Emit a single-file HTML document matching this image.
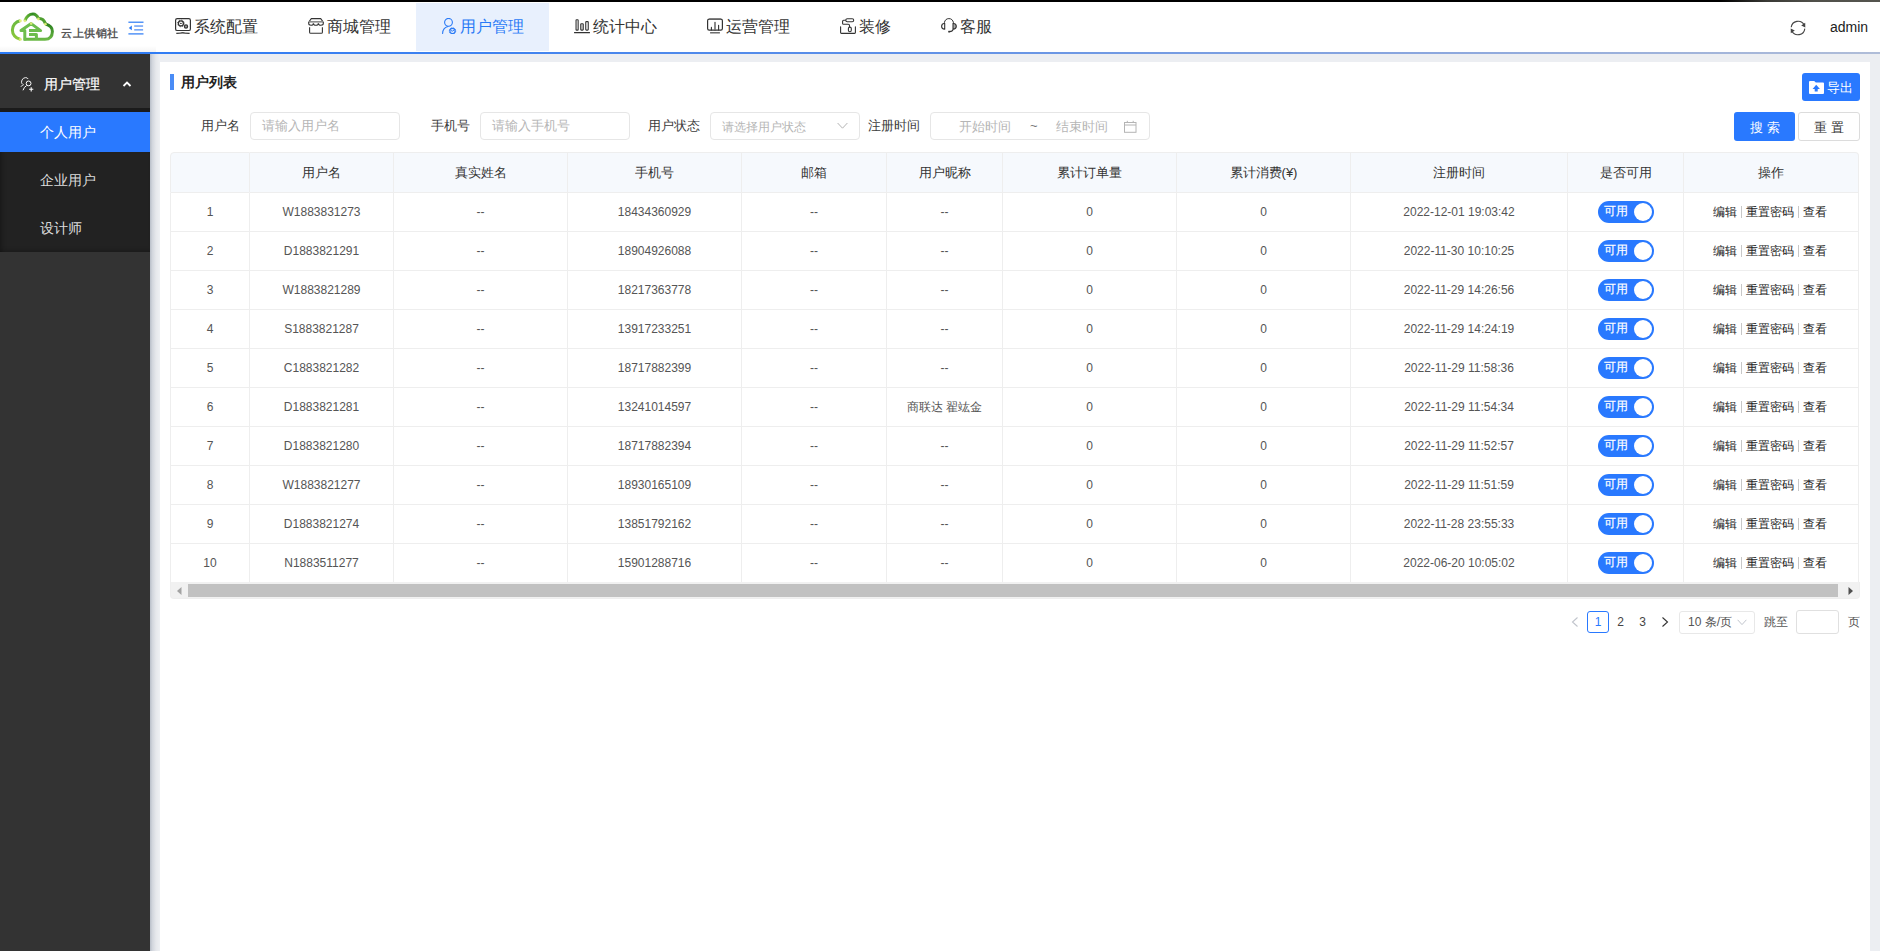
<!DOCTYPE html>
<html><head><meta charset="utf-8">
<style>
*{box-sizing:border-box;margin:0;padding:0}
html,body{width:1880px;height:951px;overflow:hidden;background:#eceef2;font-family:"Liberation Sans",sans-serif;color:#333}
.abs{position:absolute}
#topline{left:0;top:0;width:1880px;height:2px;background:linear-gradient(to right,#000 91.5%,#3a3a36 94%,#50504a 96.5%,#55554f 100%)}
#header{left:0;top:2px;width:1880px;height:50px;background:#fff}
#hline{left:0;top:52px;width:1880px;height:2px;background:linear-gradient(to right,#2a7af6 0%,#3f82ef 25%,#5a8ee8 45%,#8aa6de 75%,#b0bdd8 100%)}
#side{left:0;top:54px;width:150px;height:897px;background:#333}
#sideshadow{left:150px;top:54px;width:10px;height:897px;background:linear-gradient(to right,#b9bfc9,#d3d7de 25%,#e6e8ec 60%,#eef0f3)}
#card{left:160px;top:62px;width:1710px;height:889px;background:#fff}
.nav{top:2px;height:50px;font-size:16px;color:#333;white-space:nowrap}
.nav .ic{position:absolute;top:16px;width:16px;height:16px}
.nav .tx{position:absolute;top:0;line-height:50px}
.nav.act{background:#e8f0fd;color:#2a7af6;top:3px;height:48px}
.nav.act .ic{top:15px}
.nav.act .tx{line-height:48px}

.lbl{top:117px;font-size:13px;line-height:18px;color:#3c3c3c}
.inp{top:112px;height:28px;border:1px solid #e6e6e6;border-radius:4px;background:#fff}
.inp span{position:absolute;left:11px;top:0;line-height:26px;font-size:13px;color:#b6b6b6}
.btn{border-radius:3px}
.btn.blue{background:#2979ff}
#tbl th{height:41px;background:#f6f9fd;border-right:1px solid #eeeeee;border-bottom:1px solid #eeeeee;border-top:1px solid #eeeeee;font-weight:normal;font-size:13px;color:#333;text-align:center;padding:0}
#tbl td{height:39px;border-right:1px solid #eeeeee;border-bottom:1px solid #eeeeee;font-size:12px;color:#555;text-align:center;padding:0;white-space:nowrap}
#tbl th:first-child,#tbl td:first-child{border-left:1px solid #eeeeee}
#tbl th:first-child{border-top-left-radius:4px}
#tbl th:last-child{border-top-right-radius:4px}
.sw{display:inline-block;position:relative;width:56px;height:22px;border-radius:11px;background:#2979ff;vertical-align:middle}
.swt{position:absolute;left:6px;top:-1px;line-height:22px;font-size:12px;color:#fff;letter-spacing:0.5px;-webkit-text-stroke:0.2px #fff}
.swk{position:absolute;left:36px;top:2px;width:18px;height:18px;border-radius:50%;background:#fff}
.op{color:#222!important;padding-right:2px!important}
.op i{display:inline-block;width:1px;height:12px;background:#c8c8c8;margin:0 4px;vertical-align:middle;position:relative;top:0px}
table{border-collapse:collapse;table-layout:fixed}
</style></head>
<body>
<div id="topline" class="abs"></div>
<div id="header" class="abs"></div>
<div class="abs" style="left:0;top:46px;width:156px;height:6px;background:linear-gradient(to bottom,rgba(0,0,0,0),rgba(0,0,0,0.045))"></div><div id="hline" class="abs"></div>
<!-- logo -->
<svg class="abs" style="left:0;top:0" width="60" height="50" viewBox="0 0 60 50">
 <defs>
  <linearGradient id="lg1" x1="0" y1="0" x2="0" y2="1"><stop offset="0" stop-color="#6bb93f"/><stop offset="1" stop-color="#8cc83a"/></linearGradient>
  <linearGradient id="lg2" x1="0" y1="0" x2="1" y2="0"><stop offset="0" stop-color="#72bd3c"/><stop offset="0.55" stop-color="#2f8a22"/><stop offset="1" stop-color="#5aa834"/></linearGradient>
  <linearGradient id="lg4" x1="0" y1="0" x2="0" y2="1"><stop offset="0" stop-color="#2a7f1e"/><stop offset="1" stop-color="#6ab845"/></linearGradient>
 </defs>
 <path d="M20.1 20.8 A9.4 9.4 0 0 0 20.1 39.3" fill="none" stroke="url(#lg1)" stroke-width="3"/>
 <path d="M24.9 20.8 Q27.5 14 33 14 Q36.5 14 38.4 18.6" fill="none" stroke="url(#lg2)" stroke-width="3"/>
 <path d="M38.4 18.6 Q43.5 18 45.5 24" fill="none" stroke="#4f9f30" stroke-width="3"/>
 <path d="M45.5 24 Q52.5 26 52.4 31.5 Q52.2 39.3 45 39.3 L23.8 39.3" fill="none" stroke="url(#lg4)" stroke-width="3"/>
 <path d="M24.8 40.6 L24.8 30.6 L21 30.6 L31.2 23.6 L40.6 30.6 L29 30.6 M29 34.4 L36.4 34.4 L36.4 39.5" fill="none" stroke="#6dbd4c" stroke-width="3" stroke-linejoin="round"/>
 <circle cx="20.3" cy="20.8" r="1.5" fill="#e2ee7a" opacity="0.9"/><circle cx="20.3" cy="39.3" r="1.5" fill="#d8ea6a" opacity="0.9"/>
 <circle cx="24.9" cy="20.8" r="1.4" fill="#e2ee7a" opacity="0.9"/><circle cx="38.4" cy="19" r="1.4" fill="#e2ee7a" opacity="0.9"/><circle cx="45.4" cy="24.2" r="1.4" fill="#e2ee7a" opacity="0.9"/>
 <circle cx="31.2" cy="23.6" r="1.3" fill="#e2ee7a" opacity="0.9"/>
</svg>
<div class="abs" style="left:61px;top:25px;font-size:11px;line-height:16px;color:#585858;font-weight:bold;letter-spacing:0.5px">云上供销社</div>
<svg class="abs" style="left:128px;top:21px" width="16" height="14" viewBox="0 0 16 14"><rect x="0.4" y="0.6" width="15.1" height="1.2" fill="#2a7af6"/><rect x="6.2" y="4.3" width="8.9" height="1.5" fill="#6b9ff5"/><rect x="6.2" y="8.1" width="8.9" height="1.5" fill="#6b9ff5"/><rect x="0.4" y="12.3" width="15.1" height="1.2" fill="#2a7af6"/><path d="M0.8 7 L3.8 4.6 L3.8 9.3 Z" fill="#2a7af6"/></svg>
<!-- nav -->
<div class="abs nav" style="left:150px;width:133px">
 <svg class="ic" style="left:25px" viewBox="0 0 16 16"><rect x="0.6" y="0.6" width="14.8" height="11.9" rx="1.6" fill="none" stroke="#333" stroke-width="1.2"/><circle cx="5.9" cy="5.4" r="2.5" fill="none" stroke="#333" stroke-width="1.3"/><circle cx="5.9" cy="5.4" r="3.3" fill="none" stroke="#333" stroke-width="0.9" stroke-dasharray="1.1 1.5"/><ellipse cx="5.9" cy="5.4" rx="0.9" ry="0.6" fill="#333"/><circle cx="11" cy="8.5" r="1.6" fill="#999" stroke="#333" stroke-width="1.2"/><path d="M1.3 15.4 Q7 14.6 14.6 15.4" stroke="#333" stroke-width="1.1" fill="none"/><path d="M5.2 14.9 Q7.7 13.7 10.2 14.9 Z" fill="#333"/></svg>
 <span class="tx" style="left:44px">系统配置</span>
</div>
<div class="abs nav" style="left:283px;width:133px">
 <svg class="ic" style="left:25px" viewBox="0 0 16 16"><path d="M3.3 0.6 L12.7 0.6 L15 3.8 L1 3.8 Z" fill="none" stroke="#333" stroke-width="1.1" stroke-linejoin="round"/><path d="M1 3.8 L15 3.8" stroke="#999" stroke-width="1.2"/><path d="M0.7 4 L0.7 5.6 Q0.7 7.3 3 7.3 Q5.3 7.3 5.4 5.2 Q5.6 7.3 7.9 7.3 Q10.2 7.3 10.4 5.2 Q10.6 7.3 12.9 7.3 Q15.3 7.3 15.3 5.6 L15.3 4" fill="none" stroke="#333" stroke-width="1.1"/><path d="M1.6 9.2 L1.6 14.2 Q1.6 15.3 2.7 15.3 L13.3 15.3 Q14.4 15.3 14.4 14.2 L14.4 9.2" fill="none" stroke="#333" stroke-width="1.1"/></svg>
 <span class="tx" style="left:44px">商城管理</span>
</div>
<div class="abs nav act" style="left:416px;width:133px">
 <svg class="ic" style="left:26px" viewBox="0 0 16 16"><circle cx="6.5" cy="4.3" r="3.9" fill="none" stroke="#2a7af6" stroke-width="1.1"/><path d="M0.6 15.5 Q0.8 9.6 6 8.5" fill="none" stroke="#2a7af6" stroke-width="1.1" stroke-linecap="round"/><circle cx="10.5" cy="13" r="2.6" fill="none" stroke="#2a7af6" stroke-width="1.1"/><circle cx="10.5" cy="13" r="3.2" fill="none" stroke="#2a7af6" stroke-width="0.8" stroke-dasharray="1.6 0.9"/><path d="M9 12.6 Q10.5 14 12.3 11.8" fill="none" stroke="#2a7af6" stroke-width="1"/></svg>
 <span class="tx" style="left:44px">用户管理</span>
</div>
<div class="abs nav" style="left:549px;width:133px">
 <svg class="ic" style="left:25px" viewBox="0 0 16 16"><path d="M0.5 14.6 L15.5 14.6" stroke="#333" stroke-width="1.2" stroke-linecap="round"/><rect x="2.05" y="1.75" width="2.1" height="10.4" rx="0.5" fill="none" stroke="#333" stroke-width="1.1"/><rect x="6.75" y="5.75" width="2.5" height="6.4" rx="0.6" fill="#ddd" stroke="#333" stroke-width="1.1"/><rect x="11.75" y="3.65" width="2.5" height="8.5" rx="0.6" fill="none" stroke="#333" stroke-width="1.1"/></svg>
 <span class="tx" style="left:44px">统计中心</span>
</div>
<div class="abs nav" style="left:682px;width:133px">
 <svg class="ic" style="left:25px" viewBox="0 0 16 16"><rect x="0.6" y="1.1" width="14.8" height="11.1" rx="1.6" fill="none" stroke="#333" stroke-width="1.2"/><path d="M2.2 0.4 L13.8 0.4" stroke="#777" stroke-width="0.8"/><path d="M4.4 12 L4.4 9.4 M8 12 L8 4.3 M11.6 12 L11.6 7.3" stroke="#333" stroke-width="1.1" stroke-linecap="round"/><path d="M8 12 L8 4.3" stroke="#888" stroke-width="1.1"/><path d="M3.1 14.8 L12.9 14.8" stroke="#555" stroke-width="1.3"/></svg>
 <span class="tx" style="left:44px">运营管理</span>
</div>
<div class="abs nav" style="left:815px;width:101px">
 <svg class="ic" style="left:25px" viewBox="0 0 16 16"><rect x="5.8" y="0.8" width="7.9" height="2.9" rx="1.45" fill="none" stroke="#333" stroke-width="1.1"/><path d="M5.8 2.2 L3.6 2.2 Q2.6 2.2 2.6 3.2 L2.6 5.4 Q2.6 6.3 3.6 6.3 L8.3 6.3 Q9.5 6.3 9.5 7.5 L9.5 9" fill="none" stroke="#333" stroke-width="1.1"/><rect x="8.4" y="9.1" width="2.9" height="4.6" rx="1.45" fill="none" stroke="#333" stroke-width="1.1"/><path d="M0.6 8.7 L0.6 14.6 Q0.6 15.4 1.4 15.4 L14.6 15.4 Q15.4 15.4 15.4 14.6 L15.4 8.7" fill="none" stroke="#333" stroke-width="1.1" stroke-linecap="round"/></svg>
 <span class="tx" style="left:44px">装修</span>
</div>
<div class="abs nav" style="left:916px;width:101px">
 <svg class="ic" style="left:25px" viewBox="0 0 16 16"><path d="M3.3 4.8 Q4.2 0.6 7.9 0.6 Q11.6 0.6 12.5 4.8" fill="none" stroke="#333" stroke-width="1"/><path d="M3.7 5.2 L3.7 11.3 Q0.6 10.8 0.6 8.2 Q0.6 5.6 3.7 5.2 Z" fill="none" stroke="#333" stroke-width="1.1" stroke-linejoin="round"/><path d="M12 5.2 L12 11.3 Q15.3 10.8 15.3 8.2 Q15.3 5.6 12 5.2 Z" fill="#aaa" stroke="#333" stroke-width="1.1" stroke-linejoin="round"/><path d="M12.2 11.4 Q11.6 13.5 8.6 13.6" fill="none" stroke="#333" stroke-width="1.1"/><rect x="7.2" y="12.8" width="1.8" height="1.8" rx="0.5" fill="#333"/></svg>
 <span class="tx" style="left:44px">客服</span>
</div>
<!-- right -->
<svg class="abs" style="left:1790px;top:20px" width="16" height="16" viewBox="0 0 16 16"><path d="M1.2 7.3 A6.9 6.9 0 0 1 14.2 5" fill="none" stroke="#444" stroke-width="1.1"/><path d="M14.8 8.6 A6.9 6.9 0 0 1 1.8 11" fill="none" stroke="#444" stroke-width="1.1"/><path d="M15.2 2.8 L15.3 7.4 L11.2 5.6 Z" fill="#444"/><path d="M0.8 13.2 L0.7 8.6 L4.8 10.4 Z" fill="#444"/></svg>
<div class="abs" style="left:1830px;top:18px;font-size:14px;line-height:18px;color:#222">admin</div>

<div id="side" class="abs"></div>

<!-- sidebar -->
<div class="abs" style="left:0;top:54px;width:150px;height:54px;background:#333"></div>
<svg class="abs" style="left:20px;top:76px" width="14" height="16" viewBox="0 0 14 16"><path d="M2.2 8 Q0.8 6.5 2 4 Q3.2 1.6 5.6 1.6 Q7.4 1.6 8.2 3" fill="none" stroke="#fff" stroke-width="0.9"/><circle cx="8.6" cy="7.4" r="2.4" fill="none" stroke="#fff" stroke-width="1"/><path d="M0.9 10.8 Q1.8 9 3.8 8.6" fill="none" stroke="#fff" stroke-width="0.9"/><path d="M3 14.3 Q4 11 6.6 9.6" fill="none" stroke="#fff" stroke-width="1"/><path d="M11.2 11.2 L11.2 15.4 M9.1 13.3 L13.3 13.3" stroke="#fff" stroke-width="1.1"/></svg>
<div class="abs" style="left:44px;top:74px;font-size:14px;line-height:20px;color:#fff;-webkit-text-stroke:0.2px #fff">用户管理</div>
<svg class="abs" style="left:122px;top:80px" width="10" height="8" viewBox="0 0 10 8"><path d="M1.5 6 L5 2.5 L8.5 6" fill="none" stroke="#fff" stroke-width="1.8"/></svg>
<div class="abs" style="left:0;top:108px;width:150px;height:4px;background:#1b1b1b"></div>
<div class="abs" style="left:0;top:112px;width:150px;height:40px;background:#2979ff"></div>
<div class="abs" style="left:0;top:152px;width:150px;height:100px;background:#222;box-shadow:inset 5px 0 4px -3px rgba(0,0,0,0.25),inset 0 -4px 4px -3px rgba(0,0,0,0.25)"></div>
<div class="abs" style="left:40px;top:122px;font-size:14px;line-height:20px;color:#fff">个人用户</div>
<div class="abs" style="left:40px;top:170px;font-size:14px;line-height:20px;color:#ddd">企业用户</div>
<div class="abs" style="left:40px;top:218px;font-size:14px;line-height:20px;color:#ddd">设计师</div>
<div id="sideshadow" class="abs"></div>
<div id="card" class="abs"></div>
<div class="abs" style="left:170px;top:74px;width:4px;height:16px;background:#4a8cf6"></div>
<div class="abs" style="left:181px;top:72px;font-size:14px;line-height:20px;font-weight:bold;color:#222">用户列表</div>
<div class="abs btn blue" style="left:1802px;top:73px;width:58px;height:28px">
 <svg style="position:absolute;left:7px;top:8px" width="15" height="13" viewBox="0 0 15 13"><path d="M0 1 Q0 0 1 0 L5.2 0 L6.8 1.6 L14 1.6 Q15 1.6 15 2.6 L15 12 Q15 13 14 13 L1 13 Q0 13 0 12 Z" fill="#fff"/><path d="M7.2 3.8 L10.9 8 L8.7 8 L8.7 10.6 L5.7 10.6 L5.7 8 L3.6 8 Z" fill="#2979ff"/></svg>
 <span style="position:absolute;left:25px;top:1px;line-height:28px;font-size:13px;color:#fff">导出</span>
</div>
<div class="abs lbl" style="left:201px">用户名</div>
<div class="abs inp" style="left:250px;width:150px"><span>请输入用户名</span></div>
<div class="abs lbl" style="left:431px">手机号</div>
<div class="abs inp" style="left:480px;width:150px"><span>请输入手机号</span></div>
<div class="abs lbl" style="left:648px">用户状态</div>
<div class="abs inp" style="left:710px;width:150px"><span style="font-size:12px;top:1px">请选择用户状态</span>
 <svg style="position:absolute;left:126px;top:9px" width="11" height="8" viewBox="0 0 11 8"><path d="M0.6 1 L5.5 6.2 L10.4 1" fill="none" stroke="#b4b4b4" stroke-width="1"/></svg>
</div>
<div class="abs lbl" style="left:868px">注册时间</div>
<div class="abs inp" style="left:930px;width:220px">
 <span style="left:28px;top:1px">开始时间</span><span style="left:99px;color:#777">~</span><span style="left:125px;top:1px">结束时间</span>
 <svg style="position:absolute;left:193px;top:7px" width="13" height="14" viewBox="0 0 13 14"><rect x="0.5" y="2.5" width="11.5" height="9.8" fill="none" stroke="#b4b4b4" stroke-width="1"/><path d="M0.5 5 L12 5" stroke="#b4b4b4" stroke-width="1"/><path d="M3.3 0.8 L3.3 3 M9.2 0.8 L9.2 3" stroke="#b4b4b4" stroke-width="1"/></svg>
</div>
<div class="abs btn blue" style="left:1734px;top:112px;width:61px;height:29px;line-height:31px;text-align:center;font-size:13px;color:#fff;letter-spacing:4px;text-indent:4px">搜索</div>
<div class="abs btn" style="left:1798px;top:112px;width:62px;height:29px;line-height:30px;text-align:center;font-size:13px;color:#333;letter-spacing:4px;text-indent:4px;border:1px solid #dcdcdc;background:#fff">重置</div>
<table id="tbl" class="abs" style="left:170px;top:152px;border-spacing:0;border-collapse:separate"><colgroup><col style="width:80px"><col style="width:144px"><col style="width:174px"><col style="width:174px"><col style="width:145px"><col style="width:116px"><col style="width:174px"><col style="width:174px"><col style="width:217px"><col style="width:116px"><col style="width:175px"></colgroup><tr class="th"><th></th><th>用户名</th><th>真实姓名</th><th>手机号</th><th>邮箱</th><th>用户昵称</th><th>累计订单量</th><th>累计消费(¥)</th><th>注册时间</th><th>是否可用</th><th>操作</th></tr><tr><td>1</td><td>W1883831273</td><td>--</td><td>18434360929</td><td>--</td><td>--</td><td>0</td><td>0</td><td>2022-12-01 19:03:42</td><td><span class="sw"><span class="swt">可用</span><span class="swk"></span></span></td><td class="op">编辑<i></i>重置密码<i></i>查看</td></tr><tr><td>2</td><td>D1883821291</td><td>--</td><td>18904926088</td><td>--</td><td>--</td><td>0</td><td>0</td><td>2022-11-30 10:10:25</td><td><span class="sw"><span class="swt">可用</span><span class="swk"></span></span></td><td class="op">编辑<i></i>重置密码<i></i>查看</td></tr><tr><td>3</td><td>W1883821289</td><td>--</td><td>18217363778</td><td>--</td><td>--</td><td>0</td><td>0</td><td>2022-11-29 14:26:56</td><td><span class="sw"><span class="swt">可用</span><span class="swk"></span></span></td><td class="op">编辑<i></i>重置密码<i></i>查看</td></tr><tr><td>4</td><td>S1883821287</td><td>--</td><td>13917233251</td><td>--</td><td>--</td><td>0</td><td>0</td><td>2022-11-29 14:24:19</td><td><span class="sw"><span class="swt">可用</span><span class="swk"></span></span></td><td class="op">编辑<i></i>重置密码<i></i>查看</td></tr><tr><td>5</td><td>C1883821282</td><td>--</td><td>18717882399</td><td>--</td><td>--</td><td>0</td><td>0</td><td>2022-11-29 11:58:36</td><td><span class="sw"><span class="swt">可用</span><span class="swk"></span></span></td><td class="op">编辑<i></i>重置密码<i></i>查看</td></tr><tr><td>6</td><td>D1883821281</td><td>--</td><td>13241014597</td><td>--</td><td>商联达 翟竑金</td><td>0</td><td>0</td><td>2022-11-29 11:54:34</td><td><span class="sw"><span class="swt">可用</span><span class="swk"></span></span></td><td class="op">编辑<i></i>重置密码<i></i>查看</td></tr><tr><td>7</td><td>D1883821280</td><td>--</td><td>18717882394</td><td>--</td><td>--</td><td>0</td><td>0</td><td>2022-11-29 11:52:57</td><td><span class="sw"><span class="swt">可用</span><span class="swk"></span></span></td><td class="op">编辑<i></i>重置密码<i></i>查看</td></tr><tr><td>8</td><td>W1883821277</td><td>--</td><td>18930165109</td><td>--</td><td>--</td><td>0</td><td>0</td><td>2022-11-29 11:51:59</td><td><span class="sw"><span class="swt">可用</span><span class="swk"></span></span></td><td class="op">编辑<i></i>重置密码<i></i>查看</td></tr><tr><td>9</td><td>D1883821274</td><td>--</td><td>13851792162</td><td>--</td><td>--</td><td>0</td><td>0</td><td>2022-11-28 23:55:33</td><td><span class="sw"><span class="swt">可用</span><span class="swk"></span></span></td><td class="op">编辑<i></i>重置密码<i></i>查看</td></tr><tr><td>10</td><td>N1883511277</td><td>--</td><td>15901288716</td><td>--</td><td>--</td><td>0</td><td>0</td><td>2022-06-20 10:05:02</td><td><span class="sw"><span class="swt">可用</span><span class="swk"></span></span></td><td class="op">编辑<i></i>重置密码<i></i>查看</td></tr></table>
<div class="abs" id="scroll" style="left:170px;top:582px;width:1690px;height:17px;background:#f1f1f1;border:1px solid #eee;border-top:none;border-radius:0 0 4px 4px">
 <svg style="position:absolute;left:6px;top:5px" width="5" height="8" viewBox="0 0 5 8"><path d="M4.5 0 L4.5 8 L0 4 Z" fill="#a3a3a3"/></svg>
 <div style="position:absolute;left:17px;top:2px;width:1650px;height:13px;background:#c1c1c1"></div>
 <svg style="position:absolute;left:1677px;top:5px" width="5" height="8" viewBox="0 0 5 8"><path d="M0.5 0 L0.5 8 L5 4 Z" fill="#505050"/></svg>
</div>
<!-- pagination -->
<svg class="abs" style="left:1571px;top:617px" width="8" height="10" viewBox="0 0 8 10"><path d="M6.5 0.5 L1.5 5 L6.5 9.5" fill="none" stroke="#c0c4cc" stroke-width="1.1"/></svg>
<div class="abs" style="left:1587px;top:611px;width:22px;height:22px;border:1px solid #2979ff;border-radius:3px;font-size:12px;line-height:20px;text-align:center;color:#2979ff">1</div>
<div class="abs" style="left:1612px;top:611px;width:17px;height:22px;font-size:12px;line-height:22px;text-align:center;color:#444">2</div>
<div class="abs" style="left:1634px;top:611px;width:17px;height:22px;font-size:12px;line-height:22px;text-align:center;color:#444">3</div>
<svg class="abs" style="left:1661px;top:617px" width="8" height="10" viewBox="0 0 8 10"><path d="M1.5 0.5 L6.5 5 L1.5 9.5" fill="none" stroke="#333" stroke-width="1.1"/></svg>
<div class="abs" style="left:1679px;top:611px;width:76px;height:23px;border:1px solid #e8e8e8;border-radius:3px;font-size:12px;line-height:21px;color:#555;padding-left:8px">10 条/页
 <svg style="position:absolute;left:57px;top:7px" width="10" height="7" viewBox="0 0 10 7"><path d="M0.6 0.8 L5 5.6 L9.4 0.8" fill="none" stroke="#c0c4cc" stroke-width="1"/></svg>
</div>
<div class="abs" style="left:1764px;top:613px;font-size:12px;line-height:18px;color:#555">跳至</div>
<div class="abs" style="left:1796px;top:610px;width:43px;height:24px;border:1px solid #e0e0e0;border-radius:3px;background:#fff"></div>
<div class="abs" style="left:1848px;top:613px;font-size:12px;line-height:18px;color:#555">页</div>

</body></html>
